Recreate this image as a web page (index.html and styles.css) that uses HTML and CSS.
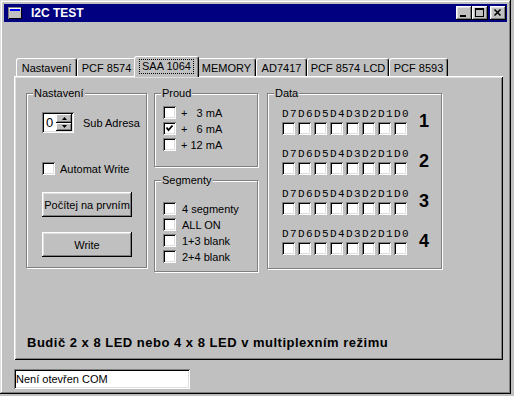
FILE: index.html
```html
<!DOCTYPE html>
<html lang="cs">
<head>
    <meta charset="UTF-8">
    <title>I2C TEST</title>
    <link rel="stylesheet" href="styles.css">
</head>
<body>
    <div class="window">
        <div class="titlebar">
            <svg class="app-icon" width="14" height="12" viewBox="0 0 14 12">
                <rect x="0.5" y="0.5" width="13" height="11" fill="#c0c0c0" stroke="#808080"/>
                <rect x="1" y="1" width="12" height="1" fill="#fff"/>
                <rect x="2" y="2" width="10" height="2" fill="#0000ff"/>
                <rect x="1" y="11" width="13" height="1" fill="#000"/>
                <rect x="13" y="0" width="1" height="12" fill="#000"/>
            </svg>
            <span class="title">I2C TEST</span>
            <div class="caption-buttons">
                <button class="cap-btn"><svg width="16" height="14"><rect x="4" y="9" width="6" height="2" fill="#000"/></svg></button>
                <button class="cap-btn"><svg width="16" height="14"><rect x="3" y="2" width="9" height="2" fill="#000"/><rect x="3.5" y="2.5" width="8" height="8" fill="none" stroke="#000"/></svg></button>
                <button class="cap-btn close"><svg width="16" height="14"><path d="M4.5 3.5 L10.5 9.5 M10.5 3.5 L4.5 9.5" stroke="#000" stroke-width="1.6" fill="none"/></svg></button>
            </div>
        </div>

        <div class="client">
            <div class="tabs">
                <div class="tab t1">Nastavení</div>
                <div class="tab t2">PCF 8574</div>
                <div class="tab t3 active"><span class="focus">SAA 1064</span></div>
                <div class="tab t4">MEMORY</div>
                <div class="tab t5">AD7417</div>
                <div class="tab t6">PCF 8574 LCD</div>
                <div class="tab t7">PCF 8593</div>
            </div>

            <div class="panel">
                <div class="groups">
                    <div class="group g-nast">
                        <span class="group-title">Nastavení</span>
                        <div class="sub-row">
                            <div class="spinner">
                                <span class="spin-value">0</span>
                                <span class="spin-btns">
                                    <span class="spin-btn"><svg width="5" height="3"><polygon points="2.5,0 5,3 0,3" fill="#000"/></svg></span>
                                    <span class="spin-btn"><svg width="5" height="3"><polygon points="0,0 5,0 2.5,3" fill="#000"/></svg></span>
                                </span>
                            </div>
                            <span class="sub-label">Sub Adresa</span>
                        </div>
                        <div class="check-row auto"><span class="checkbox"></span><span class="check-text">Automat Write</span></div>
                        <button class="btn btn-count">Počítej na prvním</button>
                        <button class="btn btn-write">Write</button>
                    </div>

                    <div class="col">
                        <div class="group g-proud">
                            <span class="group-title">Proud</span>
                            <div class="check-row"><span class="checkbox"></span><span class="check-text">+   3 mA</span></div>
                            <div class="check-row"><span class="checkbox checked"><svg width="13" height="13"><path d="M3.5 5.5 L5.5 8 L9.5 3.5" stroke="#000" stroke-width="1.8" fill="none"/></svg></span><span class="check-text">+   6 mA</span></div>
                            <div class="check-row"><span class="checkbox"></span><span class="check-text">+ 12 mA</span></div>
                        </div>
                        <div class="group g-seg">
                            <span class="group-title">Segmenty</span>
                            <div class="check-row"><span class="checkbox"></span><span class="check-text">4 segmenty</span></div>
                            <div class="check-row"><span class="checkbox"></span><span class="check-text">ALL ON</span></div>
                            <div class="check-row"><span class="checkbox"></span><span class="check-text">1+3 blank</span></div>
                            <div class="check-row"><span class="checkbox"></span><span class="check-text">2+4 blank</span></div>
                        </div>
                    </div>

                    <div class="group g-data">
                        <span class="group-title">Data</span>
                        <div class="data-row">
                            <div class="bits">D7D6D5D4D3D2D1D0</div>
                            <div class="bit-line">
                                <span class="checkbox"></span><span class="checkbox"></span><span class="checkbox"></span><span class="checkbox"></span>
                                <span class="checkbox"></span><span class="checkbox"></span><span class="checkbox"></span><span class="checkbox"></span>
                                <span class="row-num">1</span>
                            </div>
                        </div>
                        <div class="data-row">
                            <div class="bits">D7D6D5D4D3D2D1D0</div>
                            <div class="bit-line">
                                <span class="checkbox"></span><span class="checkbox"></span><span class="checkbox"></span><span class="checkbox"></span>
                                <span class="checkbox"></span><span class="checkbox"></span><span class="checkbox"></span><span class="checkbox"></span>
                                <span class="row-num">2</span>
                            </div>
                        </div>
                        <div class="data-row">
                            <div class="bits">D7D6D5D4D3D2D1D0</div>
                            <div class="bit-line">
                                <span class="checkbox"></span><span class="checkbox"></span><span class="checkbox"></span><span class="checkbox"></span>
                                <span class="checkbox"></span><span class="checkbox"></span><span class="checkbox"></span><span class="checkbox"></span>
                                <span class="row-num">3</span>
                            </div>
                        </div>
                        <div class="data-row">
                            <div class="bits">D7D6D5D4D3D2D1D0</div>
                            <div class="bit-line">
                                <span class="checkbox"></span><span class="checkbox"></span><span class="checkbox"></span><span class="checkbox"></span>
                                <span class="checkbox"></span><span class="checkbox"></span><span class="checkbox"></span><span class="checkbox"></span>
                                <span class="row-num">4</span>
                            </div>
                        </div>
                    </div>
                </div>

                <div class="mode-text">Budič 2 x 8 LED nebo 4 x 8 LED v multiplexním režimu</div>
            </div>

            <div class="status">Není otevřen COM</div>
        </div>
    </div>
</body>
</html>
```

FILE: styles.css
```css
body {
    margin: 0;
    background: #c0c0c0;
    font-family: "Liberation Sans", Arial, sans-serif;
    font-size: 11px;
    color: #000;
}

/* window frame */
.window {
    width: 511px;
    height: 394px;
    box-sizing: border-box;
    padding: 4px;
    background: #c0c0c0;
    box-shadow: inset -1px -1px #000, inset 1px 1px #dfdfdf,
                inset -2px -2px #808080, inset 2px 2px #fff;
}

.titlebar {
    height: 18px;
    background: #000080;
    display: flex;
    align-items: center;
    padding: 0 1px 0 4px;
}

.app-icon {
    display: block;
    margin-right: 9px;
}

.title {
    color: #fff;
    font-weight: bold;
    font-size: 12px;
    flex: 1;
}

.caption-buttons {
    display: flex;
}

.cap-btn {
    width: 16px;
    height: 14px;
    padding: 0;
    border: none;
    background: #c0c0c0;
    box-shadow: inset -1px -1px #000, inset 1px 1px #fff,
                inset -2px -2px #808080, inset 2px 2px #dfdfdf;
}

.cap-btn svg {
    display: block;
}

.cap-btn.close {
    margin-left: 2px;
}

/* tabs */
.tabs {
    display: flex;
    align-items: flex-end;
    height: 20px;
    margin: 34px 0 0 12px;
}

.tab {
    height: 18px;
    box-sizing: border-box;
    display: flex;
    align-items: center;
    justify-content: center;
    background: #c0c0c0;
    border-top: 1px solid #fff;
    border-left: 1px solid #fff;
    border-right: 1px solid #000;
    border-radius: 3px 3px 0 0;
    box-shadow: inset -1px 0 #808080;
    white-space: nowrap;
}

.t1 { width: 61px; }
.t2 { width: 59px; }
.t3 { width: 61px; }
.t4 { width: 59px; }
.t5 { width: 51px; }
.t6 { width: 82px; }
.t7 { width: 59px; }

.tab.active {
    width: 65px;
    height: 21px;
    margin: 0 -2px -1px;
    padding-bottom: 2px;
    position: relative;
    z-index: 2;
}

.focus {
    border: 1px dotted #000;
    padding: 0 2px;
    line-height: 13px;
}

/* tab page */
.panel {
    height: 284px;
    margin-left: 10px;
    width: 489px;
    box-sizing: border-box;
    padding: 17px 0 0 12px;
    box-shadow: inset 1px 1px #fff, inset -1px -1px #000,
                inset 2px 2px #dfdfdf, inset -2px -2px #808080;
}

.groups {
    display: flex;
    align-items: flex-start;
}

.group {
    position: relative;
    box-sizing: border-box;
    border: 1px solid #808080;
    box-shadow: inset 1px 1px #fff, 1px 1px #fff;
}

.group-title {
    position: absolute;
    top: -7px;
    left: 6px;
    padding: 0 1px;
    line-height: 13px;
    background: #c0c0c0;
}

.g-nast {
    width: 121px;
    height: 175px;
    margin-right: 7px;
    padding: 18px 0 0 15px;
}

.col {
    display: flex;
    flex-direction: column;
    margin-right: 9px;
}

.g-proud {
    width: 104px;
    height: 74px;
    padding: 12px 0 0 8px;
}

.g-seg {
    width: 104px;
    height: 92px;
    margin-top: 13px;
    padding: 21px 0 0 8px;
}

.g-data {
    width: 175px;
    height: 176px;
    padding: 13px 0 0 14px;
}

/* controls */
.sub-row {
    display: flex;
    align-items: center;
}

.spinner {
    width: 32px;
    height: 21px;
    box-sizing: border-box;
    padding: 2px;
    display: flex;
    background: #fff;
    box-shadow: inset 1px 1px #808080, inset -1px -1px #fff,
                inset 2px 2px #000, inset -2px -2px #dfdfdf;
}

.spin-value {
    flex: 1;
    padding-left: 2px;
    line-height: 17px;
    font-size: 13px;
}

.spin-btns {
    width: 16px;
    display: flex;
    flex-direction: column;
}

.spin-btn {
    flex: 1;
    display: flex;
    align-items: center;
    justify-content: center;
    background: #c0c0c0;
    box-shadow: inset -1px -1px #000, inset 1px 1px #fff, inset -2px -2px #808080;
}

.spin-btn svg {
    display: block;
}

.sub-label {
    margin-left: 9px;
}

.check-row {
    display: flex;
    align-items: center;
    height: 13px;
    margin-bottom: 3px;
}

.check-text {
    margin-left: 5px;
    white-space: pre;
}

.g-seg .check-text {
    margin-left: 6px;
}

.check-row.auto {
    margin: 29px 0 0;
}

.checkbox {
    display: block;
    width: 13px;
    height: 13px;
    flex: none;
    background: #fff;
    box-shadow: inset 1px 1px #808080, inset -1px -1px #fff,
                inset 2px 2px #000, inset -2px -2px #dfdfdf;
}

.checkbox svg {
    display: block;
}

.btn {
    display: block;
    width: 90px;
    height: 25px;
    padding: 0;
    border: none;
    background: #c0c0c0;
    font-family: inherit;
    font-size: 11px;
    color: #000;
    box-shadow: inset -1px -1px #000, inset 1px 1px #fff,
                inset -2px -2px #808080, inset 2px 2px #dfdfdf;
}

.btn-count {
    margin-top: 17px;
}

.btn-write {
    margin-top: 15px;
}

/* data bits */
.data-row {
    margin-bottom: 12px;
}

.bits {
    font-family: "Liberation Mono", "Courier New", monospace;
    font-size: 11px;
    letter-spacing: 1.4px;
    line-height: 13px;
    height: 13px;
    margin-bottom: 2px;
    padding-top: 1px;
    box-sizing: border-box;
}

.bit-line {
    display: flex;
    align-items: flex-start;
    gap: 3px;
}

.row-num {
    margin: -7px 0 0 9px;
    font-weight: bold;
    font-size: 18px;
    line-height: 13px;
}

.mode-text {
    margin-top: 63px;
    padding-left: 1px;
    font-weight: bold;
    font-size: 13px;
    letter-spacing: 0.5px;
    line-height: 15px;
}

.status {
    margin: 9px 0 0 10px;
    width: 176px;
    height: 20px;
    box-sizing: border-box;
    padding-left: 2px;
    line-height: 20px;
    background: #fff;
    box-shadow: inset 1px 1px #808080, inset -1px -1px #fff,
                inset 2px 2px #000, inset -2px -2px #dfdfdf;
}
```
